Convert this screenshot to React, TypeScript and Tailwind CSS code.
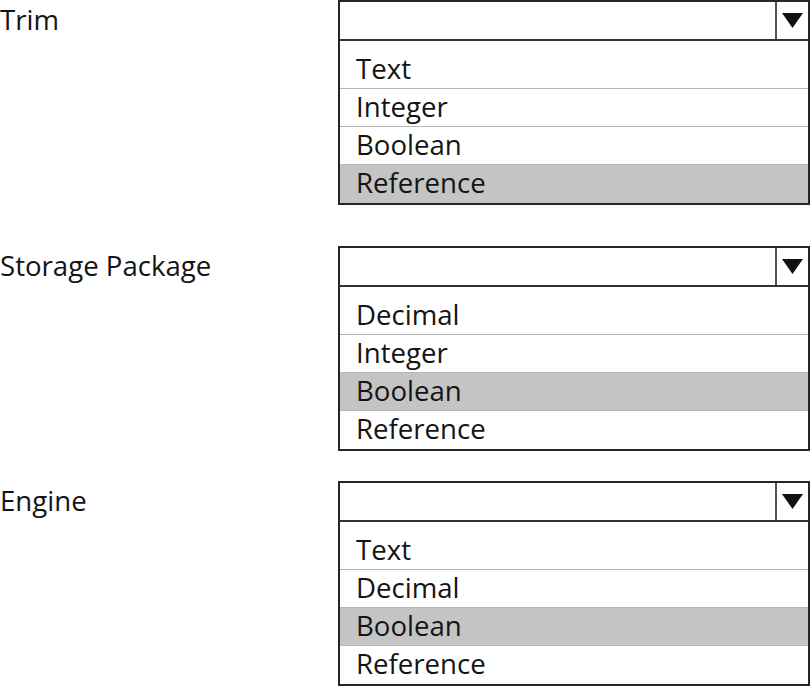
import React from "react";

type Field = { label: string; options: string[]; selected: number; mt: string };

const fields: Field[] = [
  { label: "Trim", options: ["Text", "Integer", "Boolean", "Reference"], selected: 3, mt: "mt-0" },
  { label: "Storage Package", options: ["Decimal", "Integer", "Boolean", "Reference"], selected: 2, mt: "mt-[41px]" },
  { label: "Engine", options: ["Text", "Decimal", "Boolean", "Reference"], selected: 2, mt: "mt-[30px]" },
];

function Dropdown({ options, selected }: { options: string[]; selected: number }) {
  return (
    <div className="w-[472px] border-2 border-[#262626] bg-white">
      <div className="flex h-[39px] border-b-2 border-[#333]">
        <div className="flex-1" />
        <div className="w-[2px] bg-[#555]" />
        <div className="flex w-[31px] items-center justify-center">
          <svg width="21" height="15" viewBox="0 0 21 15">
            <polygon points="0,0 21,0 10.5,15" fill="#111" />
          </svg>
        </div>
      </div>
      <div className="pt-[10px]">
        {options.map((o, i) => (
          <div
            key={o + i}
            className={
              (i === selected ? "bg-[#c4c4c4] " : "bg-white ") +
              (i < options.length - 1 ? "border-b border-[#b8b8b8] " : "") +
              "h-[38px] pl-[16px] leading-[34px]"
            }
          >
            {o}
          </div>
        ))}
      </div>
    </div>
  );
}

export default function App() {
  return (
    <div
      className="w-[811px] h-[687px] bg-white text-[#141414] text-[27.6px] overflow-hidden"
      style={{ fontFamily: '"Open Sans", "Noto Sans", sans-serif' }}
    >
      {fields.map((f) => (
        <div key={f.label} className={"flex items-start " + f.mt}>
          <div className="w-[338px] pt-[1px] leading-[37px]">{f.label}</div>
          <Dropdown options={f.options} selected={f.selected} />
        </div>
      ))}
    </div>
  );
}
